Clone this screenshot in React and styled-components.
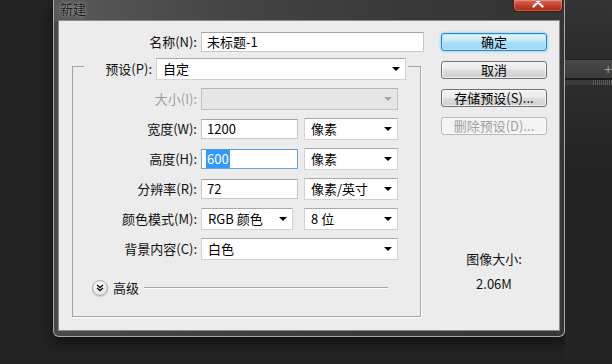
import React from "react";
import styled, { createGlobalStyle } from "styled-components";

const GlobalStyle = createGlobalStyle`
  html, body {
    margin: 0;
    padding: 0;
  }
  body {
    background: #232323;
    font-family: "Noto Sans CJK SC", "Noto Sans", sans-serif;
    font-size: 13px;
    color: #000;
  }
`;

const Dropdown = ({ width, disabled, children }) => (
  <DropBox $width={width} $disabled={disabled}>
    <DropValue>{children}</DropValue>
    <Caret $disabled={disabled} />
  </DropBox>
);

const App = () => {
  return (
    <>
      <GlobalStyle />
      <Desktop>
        <Window>
          <TitleBar>
            <Title>新建</Title>
            <CloseButton>
              <svg width="14" height="8" viewBox="0 5 14 8">
                <path
                  d="M2.5 1.5 L11.5 10.5 M11.5 1.5 L2.5 10.5"
                  stroke="#fff"
                  strokeWidth="2.4"
                  strokeLinecap="round"
                />
              </svg>
            </CloseButton>
          </TitleBar>

          <Client>
            <FormColumn>
              <NameRow>
                <Label $width={125}>名称(N):</Label>
                <TextBox $width={223}>未标题-1</TextBox>
              </NameRow>

              <Group>
                <Legend>
                  <Label $width={68}>预设(P):</Label>
                  <Dropdown width={250}>自定</Dropdown>
                </Legend>

                <Rows>
                  <Row>
                    <Label $disabled>大小(I):</Label>
                    <Dropdown width={197} disabled />
                  </Row>
                  <Row>
                    <Label>宽度(W):</Label>
                    <Controls>
                      <TextBox $width={97}>1200</TextBox>
                      <Dropdown width={94}>像素</Dropdown>
                    </Controls>
                  </Row>
                  <Row>
                    <Label>高度(H):</Label>
                    <Controls>
                      <TextBox $width={97} $focused>
                        <Selected>600</Selected>
                      </TextBox>
                      <Dropdown width={94}>像素</Dropdown>
                    </Controls>
                  </Row>
                  <Row>
                    <Label>分辨率(R):</Label>
                    <Controls>
                      <TextBox $width={97}>72</TextBox>
                      <Dropdown width={94}>像素/英寸</Dropdown>
                    </Controls>
                  </Row>
                  <Row>
                    <Label>颜色模式(M):</Label>
                    <Controls>
                      <Dropdown width={92}>RGB 颜色</Dropdown>
                      <Dropdown width={94}>8 位</Dropdown>
                    </Controls>
                  </Row>
                  <Row>
                    <Label>背景内容(C):</Label>
                    <Dropdown width={197}>白色</Dropdown>
                  </Row>
                </Rows>

                <Advanced>
                  <ToggleCircle>
                    <svg width="8" height="8" viewBox="0 0 8 8">
                      <path
                        d="M1 1 L4 3.5 L7 1 M1 4 L4 6.5 L7 4"
                        fill="none"
                        stroke="#111"
                        strokeWidth="1.4"
                      />
                    </svg>
                  </ToggleCircle>
                  <AdvancedText>高级</AdvancedText>
                  <Rule />
                </Advanced>
              </Group>
            </FormColumn>

            <SideColumn>
              <Button $primary>确定</Button>
              <Button>取消</Button>
              <Button>存储预设(S)...</Button>
              <Button $disabled>删除预设(D)...</Button>
              <SizeInfo>
                <SizeLine>图像大小:</SizeLine>
                <SizeLine>2.06M</SizeLine>
              </SizeInfo>
            </SideColumn>
          </Client>
        </Window>

        <PanelStrip>
          <PanelTop />
          <PanelTabs>
            <PanelPlus>+</PanelPlus>
          </PanelTabs>
          <PanelRuler />
          <PanelBody />
        </PanelStrip>
      </Desktop>
    </>
  );
};

const Desktop = styled.div`
  display: flex;
  height: 364px;
  overflow: hidden;
  padding-left: 53px;
  background: #232323;
`;

const Window = styled.div`
  flex-shrink: 0;
  display: flex;
  flex-direction: column;
  width: 512px;
  height: 337px;
  box-sizing: border-box;
  padding: 0 5px 6px;
  border: 1px solid #a9a9a9;
  border-top: 0;
  border-radius: 0 0 6px 6px;
  background: linear-gradient(90deg, #4a4a4a, #3c3c3c 50%, #363636);
  box-shadow: 0 6px 14px rgba(0, 0, 0, 0.55);
`;

const TitleBar = styled.div`
  display: flex;
  align-items: flex-start;
  height: 21px;
  margin: 0 -5px;
  padding-left: 6px;
  background: linear-gradient(90deg, #5a5a5a, #444 35%, #383838 70%, #343434);
`;

const Title = styled.div`
  padding-top: 1px;
  line-height: 15px;
  font-size: 13px;
  color: #1b1b1b;
  text-shadow: 0 0 5px rgba(255, 255, 255, 0.45), 0 0 2px rgba(255, 255, 255, 0.3);
`;

const CloseButton = styled.div`
  margin-left: auto;
  margin-right: 1px;
  width: 50px;
  height: 12px;
  box-sizing: border-box;
  display: flex;
  justify-content: center;
  align-items: flex-end;
  padding-bottom: 2px;
  overflow: hidden;
  border: 1px solid #4a1a12;
  border-top: 0;
  border-radius: 0 0 5px 5px;
  background: linear-gradient(#d9695a, #c3402d 50%, #a52a17);
  box-shadow: inset 0 0 0 1px rgba(255, 255, 255, 0.25);
`;

const Client = styled.div`
  flex: 1;
  display: flex;
  padding: 11px 0 0 13px;
  background: #ececec;
  box-shadow: 0 0 0 1px #8a8a8a;
`;

const FormColumn = styled.div`
  display: flex;
  flex-direction: column;
  width: 352px;
`;

const NameRow = styled.div`
  display: flex;
  align-items: center;
  gap: 4px;
  height: 20px;
`;

const Label = styled.div`
  width: ${(p) => p.$width || 124}px;
  flex-shrink: 0;
  text-align: right;
  line-height: 20px;
  white-space: nowrap;
  color: ${(p) => (p.$disabled ? "#9d9d9d" : "#111")};
`;

const TextBox = styled.div`
  width: ${(p) => p.$width}px;
  height: 20px;
  box-sizing: border-box;
  display: flex;
  align-items: center;
  padding-left: 5px;
  background: #fff;
  border: 1px solid ${(p) => (p.$focused ? "#6fa6dc" : "#c6c6c6")};
  border-top-color: ${(p) => (p.$focused ? "#5b97d3" : "#a5a5a5")};
  line-height: 18px;
  white-space: nowrap;
`;

const Selected = styled.span`
  background: #3399ff;
  color: #fff;
  margin-left: -1px;
  padding: 0 1px;
`;

const DropBox = styled.div`
  width: ${(p) => p.$width}px;
  height: 22px;
  box-sizing: border-box;
  display: flex;
  align-items: center;
  padding: 0 5px 0 6px;
  background: ${(p) => (p.$disabled ? "#e6e6e6" : "#fff")};
  border: 1px solid ${(p) => (p.$disabled ? "#c2c2c2" : "#d2d2d2")};
  border-top-color: ${(p) => (p.$disabled ? "#b4b4b4" : "#a9a9a9")};
  white-space: nowrap;
`;

const DropValue = styled.span`
  flex: 1;
  line-height: 20px;
`;

const Caret = styled.span`
  width: 0;
  height: 0;
  border-left: 4px solid transparent;
  border-right: 4px solid transparent;
  border-top: 4px solid ${(p) => (p.$disabled ? "#a6a6a6" : "#000")};
`;

const Group = styled.fieldset`
  width: 349px;
  box-sizing: border-box;
  margin: 0;
  padding: 0 0 20px 0;
  border: 1px solid #a3a3a3;
  box-shadow: 1px 1px 0 #fff;
  min-inline-size: 0;
`;

const Legend = styled.legend`
  display: flex;
  align-items: center;
  gap: 4px;
  width: 324px;
  box-sizing: border-box;
  margin-left: 11px;
  padding: 6px 0 0 0;
`;

const Rows = styled.div`
  display: flex;
  flex-direction: column;
  gap: 8px;
  padding-top: 8px;
`;

const Row = styled.div`
  display: flex;
  align-items: center;
  gap: 4px;
  height: 22px;
`;

const Controls = styled.div`
  display: flex;
  align-items: center;
  justify-content: space-between;
  width: 197px;
`;

const Advanced = styled.div`
  display: flex;
  align-items: center;
  height: 16px;
  margin-top: 20px;
  padding-left: 19px;
`;

const ToggleCircle = styled.div`
  width: 16px;
  height: 16px;
  box-sizing: border-box;
  display: flex;
  align-items: center;
  justify-content: center;
  border: 1px solid #a8a8a8;
  border-radius: 50%;
  background: radial-gradient(circle at 40% 35%, #ffffff, #e6e6e6 70%, #cfcfcf);
  box-shadow: 0 1px 1px rgba(0, 0, 0, 0.15);
`;

const AdvancedText = styled.span`
  margin-left: 5px;
  line-height: 16px;
  color: #111;
`;

const Rule = styled.div`
  flex: 1;
  height: 0;
  margin: 0 32px 0 5px;
  border-top: 1px solid #a8a8a8;
  border-bottom: 1px solid #fff;
`;

const SideColumn = styled.div`
  display: flex;
  flex-direction: column;
  gap: 10px;
  width: 106px;
  margin-left: 17px;
  padding-top: 1px;
`;

const Button = styled.div`
  height: 18px;
  box-sizing: border-box;
  text-align: center;
  line-height: 16px;
  border-radius: 3px;
  white-space: nowrap;
  color: ${(p) => (p.$disabled ? "#a0a0a0" : "#000")};
  border: 1px solid
    ${(p) => (p.$primary ? "#2f86c6" : p.$disabled ? "#b5b9bc" : "#707070")};
  background: ${(p) =>
    p.$primary
      ? "linear-gradient(#e6f6fd, #c4e9fb 45%, #a9dcf7 50%, #9fd8f6)"
      : p.$disabled
      ? "#f4f4f4"
      : "linear-gradient(#f3f3f3, #ebebeb 45%, #dddddd 50%, #cfcfcf)"};
  box-shadow: ${(p) =>
    p.$primary
      ? "inset 0 0 0 1px #b6e6fb, 0 0 3px #5fc4ee"
      : "inset 0 0 0 1px rgba(255, 255, 255, 0.7)"};
`;

const SizeInfo = styled.div`
  display: flex;
  flex-direction: column;
  align-items: center;
  gap: 9px;
  margin-top: 106px;
`;

const SizeLine = styled.div`
  line-height: 16px;
  color: #111;
`;

const PanelStrip = styled.div`
  flex: 1;
  display: flex;
  flex-direction: column;
`;

const PanelTop = styled.div`
  height: 59px;
  background: linear-gradient(#343434, #2b2b2b);
  border-bottom: 1px solid #222;
`;

const PanelTabs = styled.div`
  height: 18px;
  display: flex;
  align-items: center;
  justify-content: flex-end;
  background: linear-gradient(#484848, #3c3c3c);
  border-bottom: 2px solid #1a1a1a;
  overflow: hidden;
`;

const PanelPlus = styled.span`
  margin-right: 0;
  font-size: 14px;
  line-height: 18px;
  color: #9a9a9a;
`;

const PanelRuler = styled.div`
  height: 5px;
  background: #3a3a3a
    repeating-linear-gradient(90deg, #5a5a5a 0 1px, #343434 1px 2px) 28px 0 /
    100% 100% no-repeat;
`;

const PanelBody = styled.div`
  flex: 1;
  background: linear-gradient(#2c2c2c, #242424 30%);
`;

export default App;
